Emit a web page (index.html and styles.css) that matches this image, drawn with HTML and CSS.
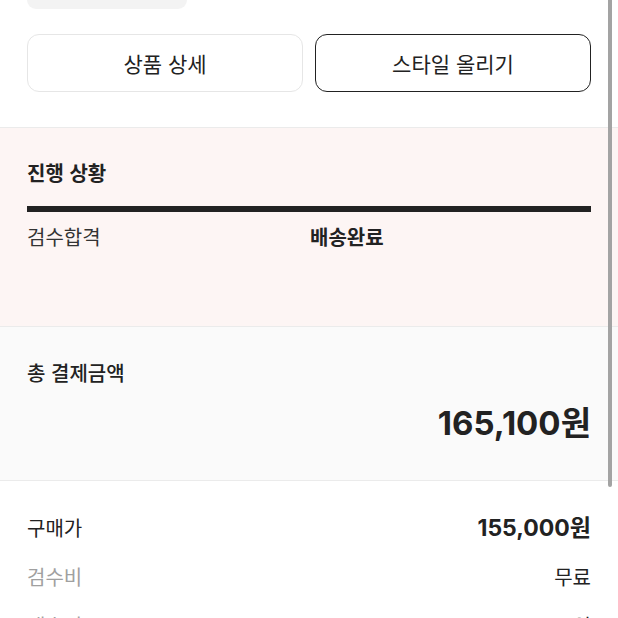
FILE: index.html
```html
<!DOCTYPE html>
<html lang="ko">
<head>
<meta charset="utf-8">
<link rel="stylesheet" href="styles.css">
</head>
<body>
<div class="page">
  <div class="top">
    <div class="pill"></div>
    <div class="actions">
      <button class="btn">상품 상세</button>
      <button class="btn btn-dark">스타일 올리기</button>
    </div>
  </div>
  <section class="progress">
    <div class="title">진행 상황</div>
    <div class="bar"></div>
    <div class="steps">
      <span class="step">검수합격</span>
      <span class="step step-on">배송완료</span>
    </div>
  </section>
  <section class="total">
    <div class="title-m">총 결제금액</div>
    <div class="amount">165,100원</div>
  </section>
  <section class="detail">
    <div class="row"><span class="lab">구매가</span><span class="val-b">155,000원</span></div>
    <div class="row"><span class="lab lab-gray">검수비</span><span class="val">무료</span></div>
    <div class="row"><span class="lab lab-gray">배송비 <span class="info">i</span></span><span class="val">3,000원</span></div>
  </section>
  <div class="scrollbar"></div>
</div>
</body>
</html>
```

FILE: styles.css
```css
* { box-sizing: border-box; }
html, body { margin: 0; padding: 0; background: #fff; }
body {
  font-family: "Noto Sans CJK KR", "Noto Sans", sans-serif;
  color: #222;
  width: 618px;
  height: 618px;
  overflow: hidden;
}
.page { position: relative; width: 618px; }
.top { padding: 0 27px 35px; }
.pill {
  width: 160px;
  height: 9px;
  background: #f3f3f3;
  border-radius: 0 0 10px 10px;
}
.actions {
  margin-top: 25px;
  display: flex;
  gap: 12px;
}
.btn {
  flex: 1;
  height: 58px;
  background: #fff;
  border: 1px solid #e6e6e6;
  border-radius: 12px;
  font-family: inherit;
  font-size: 21px;
  color: #222;
  padding: 0;
}
.btn-dark { border: 1.5px solid #222; }
.progress {
  background: #fdf5f4;
  border-top: 1px solid #ebebeb;
  border-bottom: 1px solid #ebebeb;
  padding: 31px 27px 75px;
}
.title {
  font-size: 20px;
  font-weight: 700;
  line-height: 28px;
}
.bar {
  margin-top: 19px;
  height: 6px;
  background: #222;
}
.steps {
  margin-top: 11px;
  display: grid;
  grid-template-columns: 283px 1fr;
  font-size: 20px;
  line-height: 28px;
}
.step { color: #333; }
.step-on { font-weight: 700; color: #222; }
.total {
  background: #fafafa;
  border-bottom: 1px solid #ebebeb;
  padding: 32px 27px 37px;
}
.title-m {
  font-size: 20px;
  font-weight: 500;
  line-height: 28px;
}
.amount {
  margin-top: 16px;
  text-align: right;
  font-family: Inter, "Noto Sans CJK KR", sans-serif;
  font-size: 33px;
  font-weight: 700;
  line-height: 40px;
}
.detail {
  padding: 33px 27px 0;
  display: flex;
  flex-direction: column;
  gap: 21px;
}
.row {
  display: flex;
  justify-content: space-between;
  align-items: center;
  line-height: 28px;
  font-size: 20px;
}
.lab { color: #222; }
.lab-gray { color: #a0a0a0; }
.val { color: #222; }
.val-b {
  font-family: Inter, "Noto Sans CJK KR", sans-serif;
  font-weight: 700;
  font-size: 23px;
}
.info {
  display: inline-block;
  width: 18px;
  height: 18px;
  border: 1.5px solid #bbb;
  border-radius: 50%;
  font-size: 12px;
  line-height: 15px;
  text-align: center;
  vertical-align: middle;
  margin-left: 4px;
}
.scrollbar {
  position: absolute;
  top: 0;
  left: 608px;
  width: 4px;
  height: 487px;
  background: #a3a3a3;
  border-radius: 0 0 2px 2px;
}
```
